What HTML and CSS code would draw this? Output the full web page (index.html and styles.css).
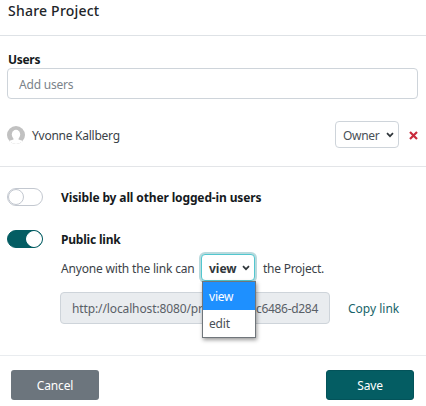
FILE: index.html
```html
<!DOCTYPE html>
<html lang="en">
<head>
<meta charset="utf-8">
<title>Share Project</title>
<link rel="stylesheet" href="styles.css">
</head>
<body>
<main class="dialog">
  <header class="header"><h1 class="title">Share Project</h1></header>
  <section class="users">
    <h2 class="label users-label">Users</h2>
    <div class="field">Add users</div>
    <div class="user-row">
      <svg class="avatar" viewBox="0 0 18 18"><defs><clipPath id="disc"><circle cx="9" cy="9" r="9"/></clipPath></defs><g clip-path="url(#disc)"><rect width="18" height="18" fill="#c1c1c1"/><ellipse cx="9" cy="8.6" rx="4.2" ry="4.8" fill="#fff"/><path d="M6.5 11.5h5v2l4 1.2V18h-13v-3.3l4-1.2z" fill="#fff"/></g></svg>
      <span class="user-name">Yvonne Kallberg</span>
      <div class="select owner"><span>Owner</span><svg class="chevron" viewBox="0 0 8 6"><path d="M1 1.2l3 3 3-3"/></svg></div>
      <svg class="remove" viewBox="0 0 9 9"><path d="M1 1l7 7M8 1L1 8"/></svg>
    </div>
  </section>
  <section class="sharing">
    <div class="option">
      <span class="switch"><i class="knob"></i></span>
      <h2 class="label visible-label">Visible by all other logged-in users</h2>
    </div>
    <div class="option public">
      <span class="switch on"><i class="knob"></i></span>
      <h2 class="label public-label">Public link</h2>
    </div>
    <div class="details">
      <div class="permission">
        <span class="before">Anyone with the link can</span>
        <div class="select access"><span class="access-value">view</span><svg class="chevron" viewBox="0 0 8 6"><path d="M1 1.2l3 3 3-3"/></svg>
          <div class="menu"><div class="item selected"><span>view</span></div><div class="item"><span>edit</span></div></div>
        </div>
        <span class="after">the Project.</span>
      </div>
      <div class="link-row">
        <div class="url"><span class="url-start">http://localhost:8080/pr</span><span class="url-end">c6486-d284</span></div>
        <span class="copy">Copy link</span>
      </div>
    </div>
  </section>
  <footer class="footer">
    <div class="button cancel"><span>Cancel</span></div>
    <div class="button save"><span>Save</span></div>
  </footer>
</main>
</body>
</html>
```
FILE: styles.css
```css
* { box-sizing: border-box; }
body { margin: 0; background: #fff; color: #3b4248; font: 12px/18px "Noto Sans", "Open Sans", sans-serif; }
h1, h2 { margin: 0; }
.dialog { width: 426px; height: 406px; overflow: hidden; }
.header { height: 36px; padding: 1px 7px 0 8px; border-bottom: 1px solid #dee2e6; }
.title { font-size: 14px; line-height: 20px; font-weight: 500; letter-spacing: .22px; color: #212529; }
.users { height: 131px; padding: 15px 8px 0 7px; border-bottom: 1px solid #e3e5e8; }
.label { font-size: 12px; line-height: 18px; font-weight: 700; color: #151a1d; white-space: nowrap; }
.users-label { height: 17px; padding-left: 1px; letter-spacing: -.3px; }
.field { height: 31px; padding: 0 11px; border: 1px solid #ced4da; border-radius: 4px; line-height: 32px; letter-spacing: -.2px; color: #7b838a; }
.user-row { display: flex; align-items: center; height: 27px; margin-top: 22px; }
.avatar { width: 18px; height: 18px; }
.user-name { margin-left: 7px; padding-top: 2px; letter-spacing: -.25px; }
.select { position: relative; display: flex; align-items: center; justify-content: space-between; height: 27px; border: 1px solid #ced4da; border-radius: 4px; background: #fff; }
.owner { width: 64px; margin-left: auto; padding: 2px 4px 0 7px; letter-spacing: -.3px; color: #495057; }
.chevron { width: 8px; height: 6px; margin-bottom: 1px; fill: none; stroke: #30363b; stroke-width: 1.7; }
.remove { width: 9px; height: 9px; margin: 2px 0 0 10px; fill: none; stroke: #c92a3c; stroke-width: 2.2; }
.sharing { height: 189px; padding: 21px 0 0 7px; border-bottom: 1px solid #e9ecef; }
.option { display: flex; align-items: center; gap: 18px; height: 18px; }
.option .label { padding-top: 2px; }
.visible-label { letter-spacing: -.13px; }
.public-label { letter-spacing: -.2px; }
.public { margin-top: 24px; }
.switch { display: flex; width: 36px; height: 18px; border: 1px solid #c3c8d0; border-radius: 9px; background: #fff; }
.knob { width: 16px; height: 16px; border: 1px solid #c3c8d0; border-radius: 50%; background: #fff; }
.on { justify-content: flex-end; border-color: #045d63; background: #045d63; }
.on .knob { border-color: #fff; }
.details { padding: 6px 0 0 53px; }
.permission { display: flex; align-items: center; height: 27px; white-space: nowrap; }
.before { width: 141px; padding-top: 2px; letter-spacing: -.18px; text-indent: 1px; }
.access { width: 54px; padding: 2px 4px 0 7px; border-color: #52c7cf; box-shadow: 0 0 0 2px #b9dadd; font-weight: 700; color: #30363b; }
.after { margin-left: 8px; padding-top: 2px; letter-spacing: -.25px; }
.menu { position: absolute; z-index: 2; top: 26px; left: 0; width: 54px; height: 57px; border: 1px solid #70767b; background: #fff; box-shadow: 1px 2px 4px #0006; font-weight: 400; color: #495057; }
.item { height: 27px; padding-left: 6px; line-height: 28px; letter-spacing: -.2px; }
.selected { height: 28px; line-height: 29px; background: #1e90ff; color: #fff; }
.link-row { display: flex; align-items: center; height: 32px; margin-top: 11px; }
.url { display: flex; justify-content: space-between; width: 270px; height: 32px; padding: 0 11px; border: 1px solid #ced4da; border-radius: 4px; background: #e9ecef; line-height: 32px; color: #596067; white-space: nowrap; }
.url-start { letter-spacing: -.12px; }
.url-end { letter-spacing: -.3px; }
.copy { margin-left: 18px; padding-top: 2px; color: #17646a; white-space: nowrap; }
.footer { display: flex; justify-content: space-between; padding: 14px 12px 0 11px; }
.button { width: 88px; height: 30px; border-radius: 3px; line-height: 32px; letter-spacing: -.15px; text-align: center; color: #fff; }
.cancel { background: #6c757d; }
.save { background: #045d63; border: 1px solid #03535a; line-height: 30px; }
```
